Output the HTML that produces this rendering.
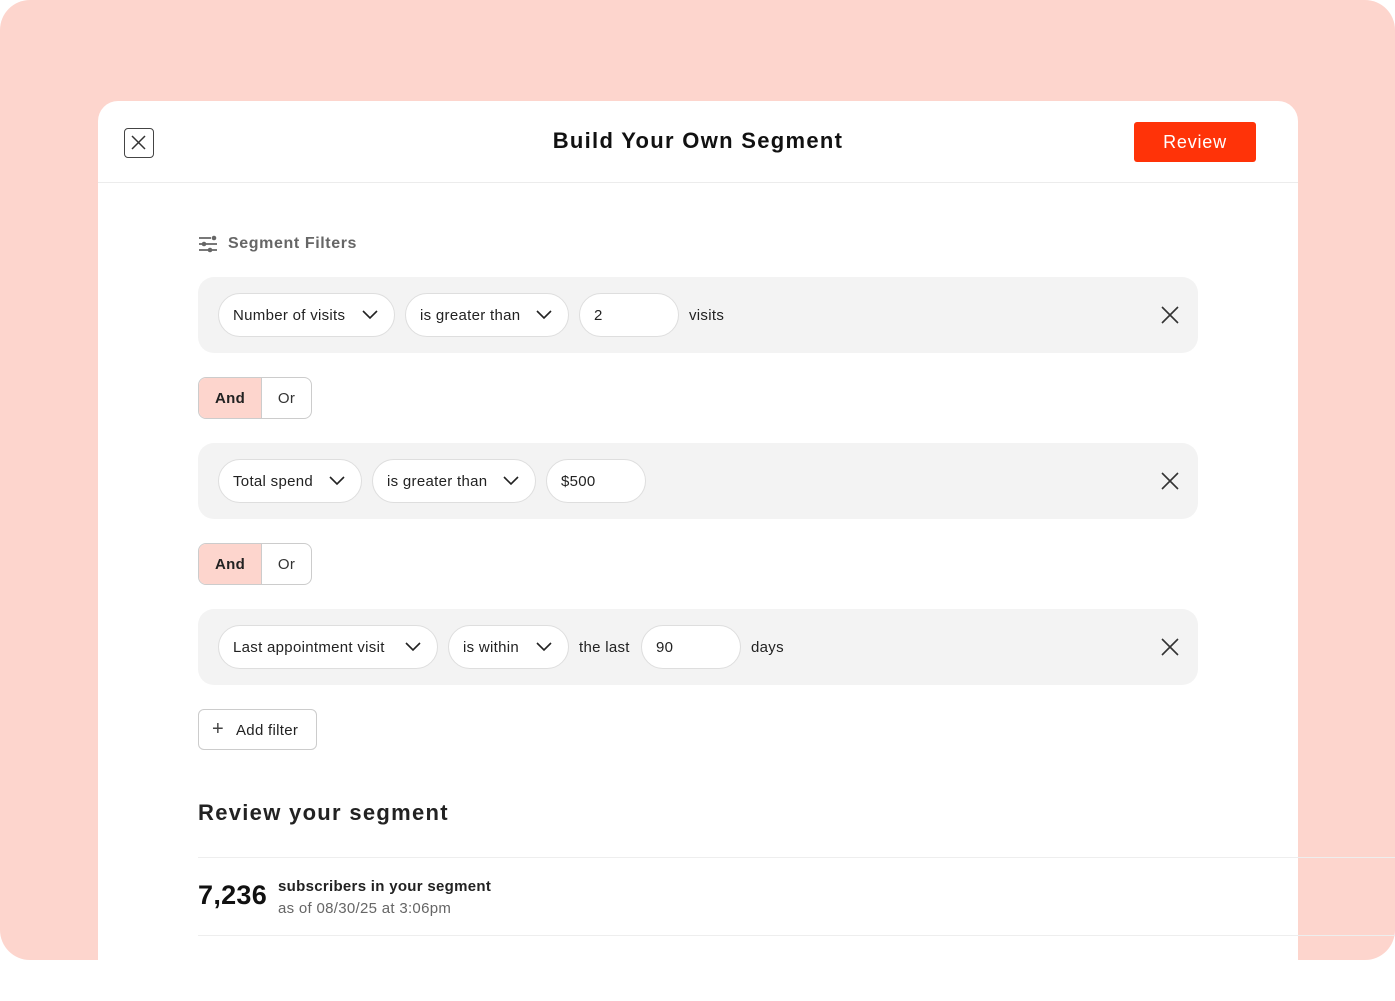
<!DOCTYPE html>
<html><head><style>
*{box-sizing:border-box;margin:0;padding:0}
body{width:1395px;height:960px;background:#fff;font-family:"Liberation Sans",sans-serif;overflow:hidden;position:relative;letter-spacing:0.3px}
.bg{position:absolute;inset:0;background:#fdd5cd;border-radius:30px}
.card{position:absolute;left:98px;top:101px;width:1200px;height:900px;background:#fff;border-radius:20px}
.hdr{position:absolute;left:0;top:0;width:1200px;height:82px;border-bottom:1px solid #ececec}
.x{position:absolute;left:26px;top:27px;width:30px;height:30px;border:1.5px solid #444;border-radius:4px}
.title{position:absolute;left:0;width:1200px;top:27px;text-align:center;font-size:22px;font-weight:bold;color:#111;letter-spacing:1.3px}
.rev{position:absolute;left:1036px;top:21px;width:122px;height:40px;background:#ff3308;border-radius:3px;color:#fff;font-size:18px;text-align:center;line-height:40px;letter-spacing:0.8px}
.sf{position:absolute;left:100px;top:134px;font-size:16px;font-weight:bold;color:#666;display:flex;align-items:center;gap:10px;letter-spacing:0.6px}
.row{position:absolute;left:100px;width:1000px;height:76px;background:#f3f3f3;border-radius:16px}
.pill{position:absolute;top:16px;height:44px;background:#fff;border:1px solid #dedede;border-radius:22px;font-size:15px;color:#222;line-height:44px;padding-left:14px}
.pill svg{position:absolute;right:16px;top:16px}
.txt{position:absolute;top:17px;line-height:44px;font-size:15px;color:#222}
.cl{position:absolute;right:19px;top:29px}
.ao{position:absolute;left:100px;width:114px;height:42px;border:1px solid #ccc;border-radius:8px;overflow:hidden;display:flex;font-size:15px}
.ao .a{width:63px;background:#fdd5cd;font-weight:bold;color:#222;text-align:center;line-height:41px;border-right:1px solid #ccc}
.ao .o{flex:1;text-align:center;line-height:41px;color:#333}
.add{position:absolute;left:100px;top:608px;width:119px;height:41px;border:1px solid #ccc;border-radius:6px;font-size:15px;color:#222;line-height:41px;padding-left:37px}
.add:before{content:"+";position:absolute;left:13px;top:-1px;font-size:20px;font-weight:300;color:#444}
.h2{position:absolute;left:100px;top:699px;font-size:22px;font-weight:bold;color:#222;letter-spacing:1.3px}
.line{position:absolute;left:198px;width:1197px;height:1px;background:#eee}
</style></head><body>
<div class="bg"></div>
<div class="card">
<div class="hdr">
<div class="x"><svg width="27" height="27" viewBox="0 0 27 27"><path d="M7 7L20 20M20 7L7 20" stroke="#333" stroke-width="1.5"/></svg></div>
<div class="title">Build Your Own Segment</div>
<div class="rev">Review</div>
</div>
<div class="sf"><svg width="20" height="18" viewBox="0 0 20 18"><g stroke="#666" stroke-width="1.8"><path d="M1 3h12M1 9h18M1 15h18"/></g><circle cx="16" cy="3" r="2.3" fill="#666"/><circle cx="6" cy="9" r="2.3" fill="#666"/><circle cx="12" cy="15" r="2.3" fill="#666"/></svg>Segment Filters</div>

<div class="row" style="top:176px">
<div class="pill" style="left:20px;width:177px">Number of visits<svg width="16" height="10"><path d="M1 1l7 7 7-7" stroke="#222" stroke-width="1.6" fill="none"/></svg></div>
<div class="pill" style="left:207px;width:164px">is greater than<svg width="16" height="10"><path d="M1 1l7 7 7-7" stroke="#222" stroke-width="1.6" fill="none"/></svg></div>
<div class="pill" style="left:381px;width:100px">2</div>
<div class="txt" style="left:491px">visits</div>
<svg class="cl" width="18" height="18"><path d="M1 1l16 16M17 1L1 17" stroke="#333" stroke-width="1.6"/></svg>
</div>
<div class="ao" style="top:276px"><div class="a">And</div><div class="o">Or</div></div>

<div class="row" style="top:342px">
<div class="pill" style="left:20px;width:144px">Total spend<svg width="16" height="10"><path d="M1 1l7 7 7-7" stroke="#222" stroke-width="1.6" fill="none"/></svg></div>
<div class="pill" style="left:174px;width:164px">is greater than<svg width="16" height="10"><path d="M1 1l7 7 7-7" stroke="#222" stroke-width="1.6" fill="none"/></svg></div>
<div class="pill" style="left:348px;width:100px">$500</div>
<svg class="cl" width="18" height="18"><path d="M1 1l16 16M17 1L1 17" stroke="#333" stroke-width="1.6"/></svg>
</div>
<div class="ao" style="top:442px"><div class="a">And</div><div class="o">Or</div></div>

<div class="row" style="top:508px">
<div class="pill" style="left:20px;width:220px">Last appointment visit<svg width="16" height="10"><path d="M1 1l7 7 7-7" stroke="#222" stroke-width="1.6" fill="none"/></svg></div>
<div class="pill" style="left:250px;width:121px">is within<svg width="16" height="10"><path d="M1 1l7 7 7-7" stroke="#222" stroke-width="1.6" fill="none"/></svg></div>
<div class="txt" style="left:381px">the last</div>
<div class="pill" style="left:443px;width:100px">90</div>
<div class="txt" style="left:553px">days</div>
<svg class="cl" width="18" height="18"><path d="M1 1l16 16M17 1L1 17" stroke="#333" stroke-width="1.6"/></svg>
</div>

<div class="add">Add filter</div>
<div class="h2">Review your segment</div>
<div style="position:absolute;left:100px;top:779px;font-size:27px;font-weight:bold;color:#111">7,236</div>
<div style="position:absolute;left:180px;top:777px;font-size:15px;font-weight:bold;color:#222">subscribers in your segment</div>
<div style="position:absolute;left:180px;top:799px;font-size:15px;color:#666">as of 08/30/25 at 3:06pm</div>
</div>
<div class="line" style="top:857px"></div>
<div class="line" style="top:935px"></div>
</body></html>
